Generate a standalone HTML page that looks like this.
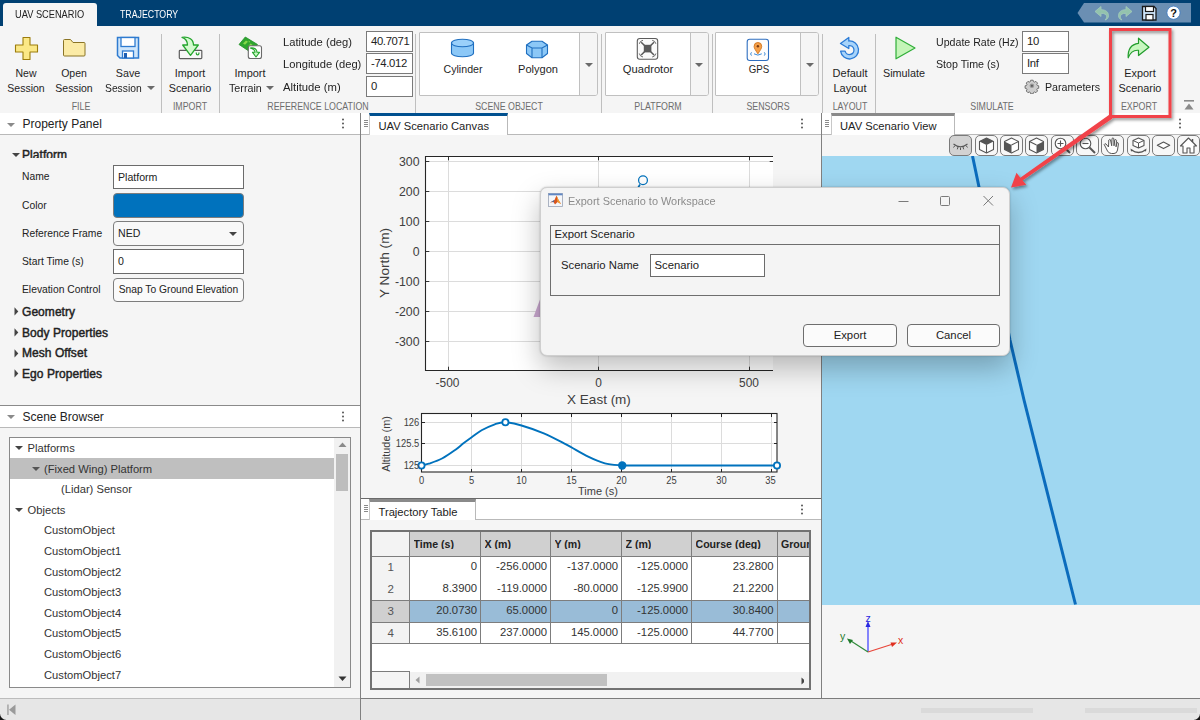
<!DOCTYPE html>
<html>
<head>
<meta charset="utf-8">
<title>UAV Scenario Designer</title>
<style>
*{box-sizing:border-box;margin:0;padding:0}
html,body{width:1200px;height:720px;overflow:hidden;background:#f5f5f5;font-family:"Liberation Sans",sans-serif;color:#222}
.a{position:absolute}
.t{position:absolute;white-space:nowrap;line-height:1}
#top{left:0;top:0;width:1200px;height:26px;background:#004072}
#ribbon{left:0;top:26px;width:1200px;height:87px;background:#f5f5f5}
.rt{position:absolute;white-space:nowrap;font-size:11.3px;line-height:15.3px;text-align:center;color:#1f1f1f;transform:translateX(-50%) scaleX(var(--sx,.95))}
.rl{position:absolute;white-space:nowrap;font-size:11.3px;line-height:14px;color:#1f1f1f;transform-origin:0 50%;transform:scaleX(var(--sx,.95))}
.sec{position:absolute;white-space:nowrap;font-size:10.4px;line-height:12px;color:#6d6d6d;transform:translateX(-50%) scaleX(.85);top:101px}
.sep{position:absolute;width:1px;background:#bfbfbf;top:34px;height:79px}
.inp{position:absolute;letter-spacing:-0.350px;background:#fff;border:1px solid #7a7a7a;font-size:11.3px;line-height:18px;padding-left:4px;color:#222;overflow:hidden;white-space:nowrap}
.gal{position:absolute;top:32px;height:64px;border:1px solid #c0c0c0;border-radius:1px 3px 3px 1px;background:#fff;overflow:hidden}
.gal .dd{position:absolute;right:0;top:0;bottom:0;width:18px;background:#f5f5f5;border-left:1px solid #c0c0c0}
.tri{position:absolute;width:0;height:0;border-left:4px solid transparent;border-right:4px solid transparent;border-top:4.5px solid #6a6a6a}
.ph{position:absolute;background:#fff;border-bottom:1px solid #b9b9b9}
.lbl{position:absolute;white-space:nowrap;font-size:10.3px;line-height:12px;color:#222;left:22px}
.pin{position:absolute;left:113px;width:131px;height:24px;background:#fff;border:1px solid #6b6b6b;font-size:10.6px;line-height:22px;padding-left:4px;white-space:nowrap;overflow:hidden}
.grp{position:absolute;white-space:nowrap;font-size:12px;letter-spacing:0.050px;line-height:14px;font-weight:normal;-webkit-text-stroke:0.450px #222;color:#222;left:22px}
.tr{position:absolute;white-space:nowrap;font-size:11.2px;line-height:14px;color:#333}
.tab{position:absolute;background:#fff;border-right:1px solid #b9b9b9;border-left:1px solid #c8c8c8;border-bottom:1px solid #b9b9b9;font-size:11.2px;line-height:14px;white-space:nowrap;color:#222}
.vb{position:absolute;top:135px;width:23px;height:21px;border:1px solid #8a8a8a;border-radius:4px;background:#f5f5f5}
table{border-collapse:collapse}
</style>
</head>
<body>
<!--RIBBON-->
<div id="ribbon" class="a" style="top:0;height:113px">
<!-- FILE -->
<svg class="a" style="left:14px;top:36px" width="26" height="25" viewBox="0 0 26 25"><path d="M9 1.500 h7 v7.500 h7.500 v7 h-7.500 v7.500 h-7 v-7.500 h-7.500 v-7 h7.500z" fill="#fbe886" stroke="#9c7c0c" stroke-width="1.100" stroke-linejoin="round"/></svg>
<div class="rt" style="--sx:.93;left:25.800px;top:65.600px">New<br>Session</div>
<svg class="a" style="left:62px;top:38px" width="25" height="20" viewBox="0 0 25 20"><path d="M1.500 2.500 q0-1 1-1 h6 l2.500 3 h11 q1 0 1 1 v11.500 q0 1-1 1 h-19.500 q-1 0-1-1z" fill="#fbeba6" stroke="#8a7426" stroke-width="1"/></svg>
<div class="rt" style="--sx:.93;left:74px;top:65.600px">Open<br>Session</div>
<svg class="a" style="left:116px;top:36px" width="24" height="24" viewBox="0 0 24 24"><path d="M1.500 1.500 h21 v20.500 h-18.500 l-2.500-2.500z" fill="#cfe6fb" stroke="#2f7bd0" stroke-width="1.500"/><rect x="5" y="1.500" width="14" height="9" fill="#fff" stroke="#2f7bd0" stroke-width="1.300"/><rect x="6.500" y="15" width="11" height="7" fill="#fff" stroke="#2f7bd0" stroke-width="1.300"/><rect x="8" y="17" width="3" height="5" fill="#1d5fb4"/></svg>
<div class="rt" style="--sx:.95;left:128px;top:65.600px">Save</div>
<div class="rl" style="--sx:.913;left:105px;top:80.600px">Session</div>
<div class="tri" style="left:146.500px;top:86px"></div>
<div class="sec" style="left:80.500px">FILE</div>
<div class="sep" style="left:161px"></div>
<!-- IMPORT -->
<svg class="a" style="left:177px;top:34px" width="27" height="27" viewBox="0 0 27 27"><rect x="2.300" y="16.300" width="22.500" height="8.300" rx="0.800" fill="#f7f7f7" stroke="#5c5c5c" stroke-width="1.200"/><path d="M5 3.300 C12 2.300 16.500 5.500 16.500 11 H21.300 L13.500 21.300 L5.700 11 H10.500 C10.500 7 8.500 4.500 5 3.300 Z" fill="#d4fbcf" stroke="#25a52e" stroke-width="1.300" stroke-linejoin="round"/><path d="M19.300 18.500 v1 a1.300 1.300 0 0 0 2.600 0 v-1" fill="none" stroke="#25a52e" stroke-width="1.200"/></svg>
<div class="rt" style="--sx:.95;left:190px;top:65.600px">Import<br>Scenario</div>
<div class="sec" style="left:190px">IMPORT</div>
<div class="sep" style="left:219px"></div>
<!-- REFERENCE LOCATION -->
<svg class="a" style="left:237px;top:35px" width="27" height="26" viewBox="0 0 27 26"><path d="M2 9.500 L8.300 2 L20.500 9.500 L14 17.500 Z" fill="#2fa52f" stroke="#23922a" stroke-width="0.800" stroke-linejoin="round"/><path d="M6 8.500 l3-3 l2 1.300 l-3 3z M11 11.500 l2.500-3 l2 1.300 l-2.500 3z M11.500 5.500 l1.500 1 l-1 1.200z" fill="#86d84a"/><rect x="11.300" y="10.700" width="13.200" height="12.800" rx="2" fill="#fff" stroke="#6a6a6a" stroke-width="1.100"/><path d="M13.200 13 C17.500 12.500 20 14 20 17.300 H22.500 L19 22 L15.500 17.300 H18 C18 15.300 16.500 14 13.200 13Z" fill="#c9f7c4" stroke="#25a52e" stroke-width="1.100" stroke-linejoin="round"/></svg>
<div class="rt" style="--sx:.97;left:250px;top:65.600px">Import</div>
<div class="rl" style="--sx:.95;left:229px;top:80.600px">Terrain</div>
<div class="tri" style="left:266px;top:86px"></div>
<div class="rl" style="--sx:.99;left:283px;top:35px">Latitude (deg)</div>
<div class="rl" style="--sx:.99;left:283px;top:57px;height:13.200px;overflow:hidden">Longitude (deg)</div>
<div class="rl" style="--sx:.999;left:283px;top:79.700px">Altitude (m)</div>
<div class="inp" style="left:366px;top:31px;width:46.500px;height:20.500px">40.7071</div>
<div class="inp" style="left:366px;top:53px;width:46.500px;height:21px">-74.012</div>
<div class="inp" style="left:366px;top:76px;width:46.500px;height:21px">0</div>
<div class="sec" style="left:317.500px">REFERENCE LOCATION</div>
<div class="sep" style="left:415.300px"></div>
<!-- SCENE OBJECT -->
<div class="gal" style="left:419px;width:179px"><div class="dd"></div></div>
<svg class="a" style="left:450px;top:38px" width="25" height="20" viewBox="0 0 25 20"><path d="M1.500 5 v10 c0 2.200 5 3.800 11 3.800 s11-1.600 11-3.800 v-10z" fill="#8cc8f7" stroke="#1f6fc0" stroke-width="1.100"/><ellipse cx="12.500" cy="5" rx="11" ry="3.800" fill="#9ad0fa" stroke="#1f6fc0" stroke-width="1.100"/></svg>
<div class="rt" style="--sx:.94;left:462.500px;top:62px">Cylinder</div>
<svg class="a" style="left:525px;top:40px" width="24" height="19" viewBox="0 0 24 19"><path d="M1.500 5 l5.500-3.800 h10 l5.500 3.800 v8.500 l-5.500 4.200 h-10 l-5.500-4.200z" fill="#8cc8f7" stroke="#1f6fc0" stroke-width="1.100" stroke-linejoin="round"/><path d="M1.500 5 l5.500 3 h10 l5.500-3 M7 8 v9.700 M17 8 v9.700" fill="none" stroke="#1f6fc0" stroke-width="1.100"/></svg>
<div class="rt" style="--sx:.98;left:537.500px;top:62px">Polygon</div>
<div class="tri" style="left:584.500px;top:62.500px"></div>
<div class="sec" style="left:509px">SCENE OBJECT</div>
<div class="sep" style="left:601px"></div>
<!-- PLATFORM -->
<div class="gal" style="left:605px;width:104px"><div class="dd"></div></div>
<svg class="a" style="left:636px;top:37px" width="23" height="24" viewBox="0 0 23 24"><rect x="1.300" y="1.500" width="20.400" height="20.800" rx="2.500" fill="#fafafa" stroke="#5c5c5c" stroke-width="1.100"/><rect x="7.800" y="7.800" width="7.600" height="7.600" fill="#5a5a5a"/><path d="M8.500 8.500 l-3.300-3.300 M14.700 8.500 l3.300-3.300 M8.500 14.700 l-3.300 3.300 M14.700 14.700 l3.300 3.300" stroke="#5a5a5a" stroke-width="1.500"/><path d="M3.300 6.800 q0.700-3 3.700-3.500 M19.900 6.800 q-0.700-3-3.700-3.500 M3.300 16.500 q0.700 3 3.700 3.500 M19.900 16.500 q-0.700 3-3.700 3.500" fill="none" stroke="#5a5a5a" stroke-width="0.900"/></svg>
<div class="rt" style="--sx:.99;left:647.500px;top:62px">Quadrotor</div>
<div class="tri" style="left:695px;top:62.500px"></div>
<div class="sec" style="left:657.500px">PLATFORM</div>
<div class="sep" style="left:712px"></div>
<!-- SENSORS -->
<div class="gal" style="left:715px;width:104px"><div class="dd"></div></div>
<svg class="a" style="left:746px;top:38px" width="24" height="24" viewBox="0 0 24 24"><rect x="1.200" y="1.200" width="21.300" height="21.300" rx="2.500" fill="#fdfdfd" stroke="#2f6fc0" stroke-width="1.100"/><path d="M11.900 15.800 c-2.500-3.800-3.800-5.500-3.800-7.500 a3.800 3.800 0 0 1 7.600 0 c0 2-1.300 3.700-3.800 7.500z" fill="#f5a04a" stroke="#d07318" stroke-width="0.900"/><circle cx="11.900" cy="8.200" r="1.200" fill="#7a3a10"/><path d="M8 15.800 q3.900 2.600 7.800 0 M5.500 14.300 q-1.800 1.700 0 3.300 M18.300 14.300 q1.800 1.700 0 3.300" fill="none" stroke="#3b8ad8" stroke-width="1"/></svg>
<div class="rt" style="--sx:.86;left:758.500px;top:62px">GPS</div>
<div class="tri" style="left:806px;top:62.500px"></div>
<div class="sec" style="left:767.500px">SENSORS</div>
<div class="sep" style="left:822px"></div>
<!-- LAYOUT -->
<svg class="a" style="left:838px;top:36px" width="24" height="25" viewBox="0 0 24 25"><path d="M10.800 1.500 L2.500 7.500 L10.800 12.500 V9.600 A4.500 4.500 0 1 1 7.100 15.200 H2.600 A9 9 0 1 0 10.800 5 Z" fill="#a8d4fa" stroke="#2b7bd6" stroke-width="1.300" stroke-linejoin="round"/></svg>
<div class="rt" style="--sx:.975;left:849.500px;top:65.600px">Default<br>Layout</div>
<div class="sec" style="left:849.500px">LAYOUT</div>
<div class="sep" style="left:875px"></div>
<!-- SIMULATE -->
<svg class="a" style="left:893.700px;top:35px" width="23" height="26" viewBox="0 0 23 26"><path d="M2 2.200 v21.600 l19-10.800z" fill="#c4f5b8" stroke="#2fae38" stroke-width="1.200" stroke-linejoin="round"/></svg>
<div class="rt" style="--sx:.955;left:904px;top:65.600px">Simulate</div>
<div class="rl" style="--sx:.94;left:936px;top:35px">Update Rate (Hz)</div>
<div class="rl" style="--sx:.945;left:936px;top:57px;height:12.700px;overflow:hidden">Stop Time (s)</div>
<div class="inp" style="left:1022px;top:31px;width:47px;height:20.500px">10</div>
<div class="inp" style="left:1022px;top:53px;width:47px;height:21px">Inf</div>
<svg class="a" style="left:1024px;top:78px" width="16" height="16" viewBox="0 0 16 16"><g transform="translate(7.900,7.800)"><path d="M-1.500-6.800h3l.4 1.700 1.300.6 1.600-.9 2.100 2.100-.9 1.600.6 1.300 1.700.4v3l-1.700.4-.6 1.300.9 1.600-2.100 2.100-1.600-.9-1.300.6-.4 1.700h-3l-.4-1.700-1.300-.6-1.600.9-2.100-2.100.9-1.600-.6-1.300-1.700-.4v-3l1.700-.4.600-1.300-.9-1.600 2.100-2.100 1.600.9 1.300-.6z" transform="scale(0.820)" fill="#cdcdcd" stroke="#6f6f6f" stroke-width="1.200" stroke-linejoin="round"/><circle r="2.300" fill="#9a9a9a"/><circle r="1.100" fill="#5f5f5f"/></g></svg>
<div class="rl" style="--sx:.945;left:1044.700px;top:80px">Parameters</div>
<div class="sec" style="left:992px">SIMULATE</div>
<!-- EXPORT -->
<svg class="a" style="left:1126px;top:36px" width="25" height="25" viewBox="0 0 25 25"><path d="M12.500 2.200 l10.500 9 l-10.500 8.300 v-5.200 c-5-0.500-8 1.500-10.300 7.500 c-0.500-8 2.800-13.500 10.300-14.500z" fill="#c8f7c0" stroke="#219c2c" stroke-width="1.200" stroke-linejoin="round"/></svg>
<div class="rt" style="--sx:.96;left:1139.500px;top:65.600px">Export<br>Scenario</div>
<div class="sec" style="left:1139px">EXPORT</div>
<svg class="a" style="left:1183px;top:99px" width="12" height="12" viewBox="0 0 12 12"><rect x="1" y="1" width="10" height="1.600" fill="#8a8a8a"/><path d="M6 4.500 l4.500 6 h-9z" fill="#8a8a8a"/></svg>
</div>
<!--TOP-->
<div id="top" class="a">
<div class="a" style="left:3px;top:3px;width:94px;height:23px;background:#f5f5f5;border-radius:3px 3px 0 0"></div>
<div class="t" style="left:15px;top:9.7px;font-size:10.4px;color:#222;transform-origin:0 50%;transform:scaleX(.89)">UAV SCENARIO</div>
<div class="t" style="left:120px;top:9.7px;font-size:10.4px;color:#fff;transform-origin:0 50%;transform:scaleX(.845)">TRAJECTORY</div>
<svg class="a" style="left:1076px;top:3px" width="116" height="20" viewBox="0 0 116 20">
<path d="M1.5 10 L8 0 H115 V19.5 H8 Z" fill="#6b8fb3"/>
<g fill="#93c3ad" stroke="#a5cbbb" stroke-width="0.8">
<path d="M19 8.5 l6-5 v3.2 c5 0 7.5 2.5 7.5 6 c0 2.300-1.500 3.800-3.500 4.300 c1.300-1.200 1.600-2.200 1.600-3.400 c0-2-1.800-3.300-5.600-3.300 v3.200z"/>
<path d="M56 8.500 l-6-5 v3.200 c-5 0-7.500 2.500-7.500 6 c0 2.300 1.500 3.800 3.500 4.300 c-1.300-1.200-1.600-2.200-1.600-3.400 c0-2 1.800-3.300 5.600-3.300 v3.200z"/>
</g>
<path d="M66.500 3.500 h11.500 l2 2 v11.500 h-13.500z" fill="#cfe6fb" stroke="#1a1a1a" stroke-width="1.300"/>
<rect x="69.500" y="3.500" width="8" height="5" fill="#fff" stroke="#1a1a1a" stroke-width="1.200"/>
<rect x="70" y="11.500" width="7" height="5.500" fill="#fff" stroke="#1a1a1a" stroke-width="1.200"/>
<circle cx="97.500" cy="9.700" r="6.600" fill="#fff" stroke="#3a78c2" stroke-width="0.800"/>
<text x="97.500" y="13.700" font-family="Liberation Sans, sans-serif" font-weight="bold" font-size="11" text-anchor="middle" fill="#111">?</text>
</svg>
</div>
<!--LEFT-->
<div class="ph" style="left:0;top:113px;width:360px;height:22px"></div>
<div class="tri" style="left:7px;top:122.500px;border-top-color:#8a8a8a;border-left-width:4px;border-right-width:4px;border-top-width:4px;margin-left:-0.500px"></div>
<div class="t" style="left:22.500px;top:118px;font-size:12px;color:#222">Property Panel</div>
<svg class="a" style="left:341px;top:118px" width="4" height="11"><circle cx="2" cy="1.500" r="1" fill="#555"/><circle cx="2" cy="5.500" r="1" fill="#555"/><circle cx="2" cy="9.500" r="1" fill="#555"/></svg>
<div class="tri" style="left:12.500px;top:152.500px;border-top-color:#444;border-left-width:4px;border-right-width:4px;border-top-width:4px;margin-left:-0.500px"></div>
<div class="grp" style="top:147.500px;height:10.500px;overflow:hidden">Platform</div>
<div class="lbl" style="top:171px">Name</div>
<div class="pin" style="top:165px">Platform</div>
<div class="lbl" style="top:199.5px">Color</div>
<div class="a" style="left:113px;top:193px;width:131px;height:25px;background:#0072bd;border:1px solid #7d7d7d;border-radius:4px"></div>
<div class="lbl" style="top:227.5px">Reference Frame</div>
<div class="pin" style="top:221px;height:25px;line-height:23px;border-radius:4px;background:#f8f8f8;border-color:#7d7d7d">NED</div>
<div class="tri" style="left:229px;top:231.500px;border-top-color:#444;border-left-width:4px;border-right-width:4px;border-top-width:4px;margin-left:-0.500px"></div>
<div class="lbl" style="top:255.5px">Start Time (s)</div>
<div class="pin" style="top:249px;height:25px;line-height:23px">0</div>
<div class="lbl" style="top:284px">Elevation Control</div>
<div class="pin" style="top:278px;border-radius:4px;background:#fafafa;border-color:#7d7d7d;padding-left:0;text-align:center;font-size:10.250px">Snap To Ground Elevation</div>
<svg class="a" style="left:13.500px;top:307px" width="5" height="9"><path d="M0.500 0.300 v8.200 l3.800-4.100z" fill="#444"/></svg>
<div class="grp" style="top:304.500px">Geometry</div>
<svg class="a" style="left:13.500px;top:328px" width="5" height="9"><path d="M0.500 0.300 v8.200 l3.800-4.100z" fill="#444"/></svg>
<div class="grp" style="top:325.500px">Body Properties</div>
<svg class="a" style="left:13.500px;top:348.500px" width="5" height="9"><path d="M0.500 0.300 v8.200 l3.800-4.100z" fill="#444"/></svg>
<div class="grp" style="top:346px">Mesh Offset</div>
<svg class="a" style="left:13.500px;top:369px" width="5" height="9"><path d="M0.500 0.300 v8.200 l3.800-4.100z" fill="#444"/></svg>
<div class="grp" style="top:366.500px">Ego Properties</div>
<div class="ph" style="left:0;top:405px;width:360px;height:23px;border-top:1px solid #8a8a8a"></div>
<div class="tri" style="left:7px;top:414.500px;border-top-color:#8a8a8a;border-left-width:4px;border-right-width:4px;border-top-width:4px;margin-left:-0.500px"></div>
<div class="t" style="left:22.500px;top:410.500px;font-size:12px;color:#222">Scene Browser</div>
<svg class="a" style="left:341px;top:411px" width="4" height="11"><circle cx="2" cy="1.500" r="1" fill="#555"/><circle cx="2" cy="5.500" r="1" fill="#555"/><circle cx="2" cy="9.500" r="1" fill="#555"/></svg>
<div class="a" style="left:9px;top:437px;width:342px;height:251px;background:#fff;border:1px solid #8a8a8a"></div>
<div class="a" style="left:10px;top:458px;width:324px;height:20.500px;background:#bfbfbf"></div>
<div class="a" style="left:334px;top:438px;width:16px;height:249px;background:#f1f1f1"></div>
<div class="a" style="left:336px;top:453.500px;width:12px;height:37px;background:#bdbdbd"></div>
<svg class="a" style="left:338px;top:442px" width="9" height="6"><path d="M0.500 5 l4-4.500 l4 4.500z" fill="#8a8a8a"/></svg>
<svg class="a" style="left:338px;top:676px" width="9" height="6"><path d="M0.500 0.500 l4 4.500 l4-4.500z" fill="#333"/></svg>
<div class="tri" style="left:15px;top:445.500px;border-top-color:#444;border-left-width:4px;border-right-width:4px;border-top-width:4px;margin-left:-0.500px"></div>
<div class="tr" style="left:27.500px;top:440.500px">Platforms</div>
<div class="tri" style="left:32px;top:466.500px;border-top-color:#555;border-left-width:4px;border-right-width:4px;border-top-width:4px;margin-left:-0.500px"></div>
<div class="tr" style="left:44px;top:461.500px">(Fixed Wing) Platform</div>
<div class="tr" style="left:61px;top:482px">(Lidar) Sensor</div>
<div class="tri" style="left:15px;top:507.500px;border-top-color:#444;border-left-width:4px;border-right-width:4px;border-top-width:4px;margin-left:-0.500px"></div>
<div class="tr" style="left:27.500px;top:502.500px">Objects</div>
<div class="tr" style="left:44px;top:523px">CustomObject</div>
<div class="tr" style="left:44px;top:543.500px">CustomObject1</div>
<div class="tr" style="left:44px;top:564.500px">CustomObject2</div>
<div class="tr" style="left:44px;top:585px">CustomObject3</div>
<div class="tr" style="left:44px;top:605.500px">CustomObject4</div>
<div class="tr" style="left:44px;top:626px">CustomObject5</div>
<div class="tr" style="left:44px;top:647px">CustomObject6</div>
<div class="tr" style="left:44px;top:667.500px">CustomObject7</div>
<div class="a" style="left:360px;top:113px;width:1px;height:607px;background:#808080"></div>
<!--CENTER-->
<div class="ph" style="left:361px;top:113px;width:461px;height:22px"></div>
<div class="tab" style="left:369px;top:113px;width:139px;height:22px;border-top:3px solid #00508f;border-bottom:none;background:#fff;padding:3px 0 0 8.500px">UAV Scenario Canvas</div>
<svg class="a" style="left:364px;top:120px" width="4" height="8"><path d="M0 0.500h4M0 2.500h4M0 4.500h4M0 6.500h4" stroke="#8a8a8a" stroke-width="1"/></svg>
<svg class="a" style="left:800px;top:118px" width="4" height="11"><circle cx="2" cy="1.500" r="1" fill="#555"/><circle cx="2" cy="5.500" r="1" fill="#555"/><circle cx="2" cy="9.500" r="1" fill="#555"/></svg>
<svg class="a" style="left:361px;top:135px" width="461" height="363" viewBox="361 135 461 363" font-family="Liberation Sans, sans-serif">
<rect x="426" y="156.500" width="347" height="214" fill="#fff"/>
<g stroke="#dcdcdc" stroke-width="1">
<path d="M426 161.500H773M426 191.500H773M426 221.500H773M426 251.500H773M426 281.500H773M426 311.500H773M426 341.500H773M448.500 157V370M598.500 157V370M749.500 157V370"/>
</g>
<path d="M773 156.500H425.500V370.500H773" fill="none" stroke="#262626" stroke-width="1.100"/>
<path d="M426 161.500h3.300M426 191.500h3.300M426 221.500h3.300M426 251.500h3.300M426 281.500h3.300M426 311.500h3.300M426 341.500h3.300M448.500 370v-3.300M598.500 370v-3.300M749.500 370v-3.300M448.500 157v3.300M598.500 157v3.300M749.500 157v3.300M769.700 161.500h3.300" stroke="#333" stroke-width="1"/>
<g font-size="12.300" fill="#404040" text-anchor="end">
<text x="419.500" y="166">300</text><text x="419.500" y="196">200</text><text x="419.500" y="226">100</text><text x="419.500" y="256">0</text><text x="419.500" y="286">-100</text><text x="419.500" y="316">-200</text><text x="419.500" y="346">-300</text>
</g>
<g font-size="11.900" fill="#404040" text-anchor="middle">
<text x="447.500" y="386.900">-500</text><text x="598.500" y="386.900">0</text><text x="749" y="386.900">500</text>
</g>
<text x="599" y="404" font-size="13.500" fill="#404040" text-anchor="middle">X East (m)</text>
<text transform="translate(388.700,263) rotate(-90)" font-size="13.600" fill="#404040" text-anchor="middle">Y North (m)</text>
<path d="M533.500 317 L542 294 L545 317z" fill="#c9a7cf"/>
<path d="M640 184.500 L560 318" stroke="#0072bd" stroke-width="1.600"/><circle cx="643" cy="180.300" r="4.400" fill="#fff" stroke="#0072bd" stroke-width="1.250"/>
<!-- altitude -->
<rect x="421.500" y="413.500" width="355.500" height="58.500" fill="#fff"/>
<path d="M471.500 414V471.500M521.500 414V471.500M571.500 414V471.500M621.500 414V471.500M671.500 414V471.500M721.500 414V471.500M771.500 414V471.500M422 422.500H777M422 443.500H777M422 465.500H777" stroke="#dcdcdc" stroke-width="1"/>
<rect x="421.500" y="413.500" width="355.500" height="58.500" fill="none" stroke="#262626" stroke-width="1.100"/>
<path d="M471.500 472v-3M521.500 472v-3M571.500 472v-3M621.500 472v-3M671.500 472v-3M721.500 472v-3M771.500 472v-3M471.500 414v3M521.500 414v3M571.500 414v3M621.500 414v3M671.500 414v3M721.500 414v3M771.500 414v3M422 422.500h3M422 443.500h3M422 465.500h3M777 422.500h-3M777 443.500h-3M777 465.500h-3" stroke="#262626" stroke-width="1"/>
<path d="M421.5 465.5 C422.7 465.2 425.4 464.9 428.8 463.7 C432.2 462.5 437.6 460.8 442.0 458.5 C446.4 456.2 451.7 452.4 455.2 449.9 C458.7 447.4 460.4 445.7 463.1 443.6 C465.9 441.5 468.6 439.5 471.7 437.3 C474.8 435.1 477.8 432.5 481.6 430.3 C485.5 428.1 490.8 425.7 494.8 424.3 C498.8 422.9 500.9 422.0 505.4 422.2 C509.8 422.4 515.1 423.6 521.5 425.5 C527.9 427.4 536.4 430.2 543.8 433.3 C551.2 436.4 558.6 440.5 566.0 444.4 C573.4 448.3 581.7 453.5 588.2 456.7 C594.7 459.9 599.2 461.8 604.9 463.3 C610.6 464.8 619.3 465.1 622.2 465.5 L777 465.5" fill="none" stroke="#0072bd" stroke-width="1.900" stroke-linejoin="round"/>
<circle cx="421.500" cy="465.500" r="3.100" fill="#fff" stroke="#0072bd" stroke-width="1.800"/>
<circle cx="505.400" cy="422.200" r="3.100" fill="#fff" stroke="#0072bd" stroke-width="1.800"/>
<circle cx="622.200" cy="465.500" r="4.200" fill="#0072bd"/>
<circle cx="777" cy="465.500" r="3.100" fill="#fff" stroke="#0072bd" stroke-width="1.800"/>
<g font-size="10.200" fill="#404040" text-anchor="end"><text transform="translate(419.300,426.3) scale(.92,1)">126</text><text transform="translate(419.300,447.2) scale(.92,1)">125.5</text><text transform="translate(419.300,469) scale(.92,1)">125</text></g>
<g font-size="10.200" fill="#404040" text-anchor="middle"><text transform="translate(421.500,484.200) scale(.92,1)">0</text><text transform="translate(471.500,484.200) scale(.92,1)">5</text><text transform="translate(521.500,484.200) scale(.92,1)">10</text><text transform="translate(571.500,484.200) scale(.92,1)">15</text><text transform="translate(621.500,484.200) scale(.92,1)">20</text><text transform="translate(671.500,484.200) scale(.92,1)">25</text><text transform="translate(721.500,484.200) scale(.92,1)">30</text><text transform="translate(770.500,484.200) scale(.92,1)">35</text></g>
<text x="598" y="495" font-size="11" fill="#404040" text-anchor="middle">Time (s)</text>
<text transform="translate(389.800,444) rotate(-90)" font-size="10.900" fill="#404040" text-anchor="middle">Altitude (m)</text>
</svg>
<div class="a" style="left:361px;top:498px;width:461px;height:1px;background:#6a6a6a"></div>
<div class="ph" style="left:361px;top:499px;width:461px;height:21px"></div>
<div class="tab" style="left:369px;top:499px;width:107px;height:21px;border-top:3px solid #8a8a8a;border-bottom:none;padding:2.500px 0 0 8.500px;font-size:11.200px">Trajectory Table</div>
<svg class="a" style="left:364px;top:505px" width="4" height="8"><path d="M0 0.500h4M0 2.500h4M0 4.500h4M0 6.500h4" stroke="#8a8a8a" stroke-width="1"/></svg>
<svg class="a" style="left:800px;top:504px" width="4" height="11"><circle cx="2" cy="1.500" r="1" fill="#555"/><circle cx="2" cy="5.500" r="1" fill="#555"/><circle cx="2" cy="9.500" r="1" fill="#555"/></svg>
<div class="a" style="left:370px;top:530px;width:441px;height:159.500px;background:#fff;border:2px solid #727272"></div>
<div class="a" style="left:372px;top:532px;width:37.500px;height:24px;background:#f3f3f3"></div>
<div class="a" style="left:409.500px;top:532px;width:399.500px;height:24px;background:#d0d0d0"></div>
<div class="a" style="left:372px;top:556px;width:37.500px;height:88px;background:#f3f3f3"></div>
<div class="a" style="left:372px;top:600px;width:37.500px;height:22px;background:#d0d0d0"></div>
<div class="a" style="left:409.500px;top:600px;width:399.500px;height:22px;background:#99bcd7"></div>
<div class="a" style="left:408.7px;top:532px;width:1px;height:112px;background:#7d7d7d"></div>
<div class="a" style="left:479.7px;top:532px;width:1px;height:112px;background:#7d7d7d"></div>
<div class="a" style="left:549.7px;top:532px;width:1px;height:112px;background:#7d7d7d"></div>
<div class="a" style="left:620.7px;top:532px;width:1px;height:112px;background:#7d7d7d"></div>
<div class="a" style="left:690.7px;top:532px;width:1px;height:112px;background:#7d7d7d"></div>
<div class="a" style="left:777px;top:532px;width:1px;height:112px;background:#7d7d7d"></div>
<div class="a" style="left:372px;top:556px;width:437px;height:1px;background:#7d7d7d"></div>
<div class="a" style="left:372px;top:600px;width:437px;height:1px;background:#7d7d7d"></div>
<div class="a" style="left:372px;top:622px;width:437px;height:1px;background:#7d7d7d"></div>
<div class="a" style="left:372px;top:643px;width:437px;height:1px;background:#7d7d7d"></div>
<div class="t" style="left:413.5px;top:538.500px;font-size:10.600px;font-weight:bold;color:#222;height:10.500px;overflow:hidden">Time (s)</div>
<div class="t" style="left:484.5px;top:538.500px;font-size:10.600px;font-weight:bold;color:#222;height:10.500px;overflow:hidden">X (m)</div>
<div class="t" style="left:554.5px;top:538.500px;font-size:10.600px;font-weight:bold;color:#222;height:10.500px;overflow:hidden">Y (m)</div>
<div class="t" style="left:625.5px;top:538.500px;font-size:10.600px;font-weight:bold;color:#222;height:10.500px;overflow:hidden">Z (m)</div>
<div class="t" style="left:695.5px;top:538.500px;font-size:10.600px;font-weight:bold;color:#222;height:10.500px;overflow:hidden">Course (deg)</div>
<div class="t" style="left:781px;top:538.500px;font-size:10.600px;font-weight:bold;color:#222;height:10.500px;overflow:hidden;width:28px;overflow:hidden">Groun</div>
<div class="t" style="left:372px;width:37.500px;text-align:center;top:562px;font-size:11.500px;color:#555">1</div>
<div class="t" style="right:723px;top:561.3px;font-size:11.300px;color:#333">0</div>
<div class="t" style="right:653px;top:561.3px;font-size:11.300px;color:#333">-256.0000</div>
<div class="t" style="right:582px;top:561.3px;font-size:11.300px;color:#333">-137.0000</div>
<div class="t" style="right:512px;top:561.3px;font-size:11.300px;color:#333">-125.0000</div>
<div class="t" style="right:426.5px;top:561.3px;font-size:11.300px;color:#333">23.2800</div>
<div class="t" style="left:372px;width:37.500px;text-align:center;top:584px;font-size:11.500px;color:#555">2</div>
<div class="t" style="right:723px;top:583.3px;font-size:11.300px;color:#333">8.3900</div>
<div class="t" style="right:653px;top:583.3px;font-size:11.300px;color:#333">-119.0000</div>
<div class="t" style="right:582px;top:583.3px;font-size:11.300px;color:#333">-80.0000</div>
<div class="t" style="right:512px;top:583.3px;font-size:11.300px;color:#333">-125.9900</div>
<div class="t" style="right:426.5px;top:583.3px;font-size:11.300px;color:#333">21.2200</div>
<div class="t" style="left:372px;width:37.500px;text-align:center;top:606px;font-size:11.500px;color:#555">3</div>
<div class="t" style="right:723px;top:605.3px;font-size:11.300px;color:#333">20.0730</div>
<div class="t" style="right:653px;top:605.3px;font-size:11.300px;color:#333">65.0000</div>
<div class="t" style="right:582px;top:605.3px;font-size:11.300px;color:#333">0</div>
<div class="t" style="right:512px;top:605.3px;font-size:11.300px;color:#333">-125.0000</div>
<div class="t" style="right:426.5px;top:605.3px;font-size:11.300px;color:#333">30.8400</div>
<div class="t" style="left:372px;width:37.500px;text-align:center;top:628px;font-size:11.500px;color:#555">4</div>
<div class="t" style="right:723px;top:627.3px;font-size:11.300px;color:#333">35.6100</div>
<div class="t" style="right:653px;top:627.3px;font-size:11.300px;color:#333">237.0000</div>
<div class="t" style="right:582px;top:627.3px;font-size:11.300px;color:#333">145.0000</div>
<div class="t" style="right:512px;top:627.3px;font-size:11.300px;color:#333">-125.0000</div>
<div class="t" style="right:426.5px;top:627.3px;font-size:11.300px;color:#333">44.7700</div>
<div class="a" style="left:372px;top:671px;width:37.500px;height:16.500px;background:#f5f5f5;border-top:1px solid #7d7d7d;border-right:1px solid #7d7d7d"></div>
<div class="a" style="left:409.500px;top:671.500px;width:399.500px;height:16px;background:#f1f1f1"></div>
<div class="a" style="left:426px;top:674px;width:181px;height:12px;background:#c1c1c1"></div>
<svg class="a" style="left:415px;top:676px" width="5" height="8"><path d="M4.500 0.500v7l-4-3.500z" fill="#a0a0a0"/></svg>
<svg class="a" style="left:801px;top:676.500px" width="3" height="8"><path d="M0.500 0.500v7l4-3.500z" fill="#444"/></svg>
<!--RIGHT-->
<div class="ph" style="left:822px;top:113px;width:378px;height:22px"></div>
<div class="a" style="left:821px;top:113px;width:1px;height:585px;background:#808080"></div>
<div class="tab" style="left:831px;top:113px;width:124px;height:22px;border-top:3px solid #8a8a8a;border-bottom:none;padding:2.500px 0 0 8px;font-size:11.200px">UAV Scenario View</div>
<svg class="a" style="left:825px;top:120px" width="4" height="8"><path d="M0 0.500h4M0 2.500h4M0 4.500h4M0 6.500h4" stroke="#8a8a8a" stroke-width="1"/></svg>
<svg class="a" style="left:1178px;top:118px" width="4" height="11"><circle cx="2" cy="1.500" r="1" fill="#555"/><circle cx="2" cy="5.500" r="1" fill="#555"/><circle cx="2" cy="9.500" r="1" fill="#555"/></svg>
<div class="a" style="left:822px;top:156px;width:378px;height:448.500px;background:#9fd7f1"></div>
<svg class="a" style="left:823px;top:156px" width="377" height="449" viewBox="823 156 377 449"><path d="M972.500 156 L979 187 L1010 340 L1024 400 L1075.500 604.500" fill="none" stroke="#0b6cbd" stroke-width="3"/></svg>
<svg class="a" style="left:949.1px;top:135px" width="23" height="21" viewBox="0 0 23 21"><rect x="0.500" y="0.500" width="22" height="20" rx="4.500" fill="#d2d2d2" stroke="#7a7a7a" stroke-width="1"/><path d="M4.500 9 q7 5.500 14 0" fill="none" stroke="#555" stroke-width="1.100"/><path d="M6 10.500 l-1.500 2 M9 12 l-0.700 2.300 M11.500 12.500 v2.500 M14 12 l0.700 2.300 M17 10.500 l1.500 2" stroke="#555" stroke-width="1"/></svg>
<svg class="a" style="left:974.5px;top:135px" width="23" height="21" viewBox="0 0 23 21"><rect x="0.500" y="0.500" width="22" height="20" rx="4.500" fill="#f7f7f7" stroke="#7a7a7a" stroke-width="1"/><path d="M11.500 3 l7 3.500 v8 l-7 3.500 l-7-3.500 v-8z" fill="#fff" stroke="#555" stroke-width="1.100" stroke-linejoin="round"/><path d="M11.500 3 l7 3.500 l-7 3.500 l-7-3.500z" fill="#555"/><path d="M11.500 10 v8" stroke="#555" stroke-width="1.100"/></svg>
<svg class="a" style="left:999.8px;top:135px" width="23" height="21" viewBox="0 0 23 21"><rect x="0.500" y="0.500" width="22" height="20" rx="4.500" fill="#f7f7f7" stroke="#7a7a7a" stroke-width="1"/><path d="M11.500 3 l7 3.500 v8 l-7 3.500 l-7-3.500 v-8z" fill="#fff" stroke="#555" stroke-width="1.100" stroke-linejoin="round"/><path d="M4.500 6.500 l7 3.500 v8 l-7-3.500z" fill="#555"/><path d="M11.500 10 l7-3.500" stroke="#555" stroke-width="1.100"/></svg>
<svg class="a" style="left:1025.2px;top:135px" width="23" height="21" viewBox="0 0 23 21"><rect x="0.500" y="0.500" width="22" height="20" rx="4.500" fill="#f7f7f7" stroke="#7a7a7a" stroke-width="1"/><path d="M11.500 3 l7 3.500 v8 l-7 3.500 l-7-3.500 v-8z" fill="#fff" stroke="#555" stroke-width="1.100" stroke-linejoin="round"/><path d="M18.500 6.500 l-7 3.500 v8 l7-3.500z" fill="#555"/><path d="M11.500 10 l-7-3.500" stroke="#555" stroke-width="1.100"/></svg>
<svg class="a" style="left:1050.5px;top:135px" width="23" height="21" viewBox="0 0 23 21"><rect x="0.500" y="0.500" width="22" height="20" rx="4.500" fill="#f7f7f7" stroke="#7a7a7a" stroke-width="1"/><circle cx="9.500" cy="8.500" r="5.300" fill="#fff" stroke="#555" stroke-width="1.100"/><path d="M6.500 8.500h6M9.500 5.500v6" stroke="#555" stroke-width="1.100"/><path d="M13.500 12.500 l5.500 5.500" stroke="#555" stroke-width="2"/></svg>
<svg class="a" style="left:1075.8px;top:135px" width="23" height="21" viewBox="0 0 23 21"><rect x="0.500" y="0.500" width="22" height="20" rx="4.500" fill="#f7f7f7" stroke="#7a7a7a" stroke-width="1"/><circle cx="9.500" cy="8.500" r="5.300" fill="#fff" stroke="#555" stroke-width="1.100"/><path d="M6.500 8.500h6" stroke="#555" stroke-width="1.100"/><path d="M13.500 12.500 l5.500 5.500" stroke="#555" stroke-width="2"/></svg>
<svg class="a" style="left:1101.2px;top:135px" width="23" height="21" viewBox="0 0 23 21"><rect x="0.500" y="0.500" width="22" height="20" rx="4.500" fill="#f7f7f7" stroke="#7a7a7a" stroke-width="1"/><path d="M7.500 12 l-2.500-3 q-1.200-0.800-1.800 0.500 l3.300 6.500 q1.500 2.500 4 2.500 h2.500 q3 0 3.500-3.500 l1-6.500 q-0.300-1.300-1.500-0.700 l-1 4 l0.500-6.500 q-0.500-1.300-1.700-0.500 l-0.800 6 l-0.200-7.300 q-0.800-1.200-1.800 0 l-0.300 7.300 l-1.200-6 q-0.900-1-1.700 0.200z" fill="#fff" stroke="#555" stroke-width="1" stroke-linejoin="round"/></svg>
<svg class="a" style="left:1126.5px;top:135px" width="23" height="21" viewBox="0 0 23 21"><rect x="0.500" y="0.500" width="22" height="20" rx="4.500" fill="#f7f7f7" stroke="#7a7a7a" stroke-width="1"/><path d="M11.500 3 l5.500 2.500 v5 l-5.500 2.500 l-5.500-2.500 v-5z" fill="#fff" stroke="#555" stroke-width="1.100" stroke-linejoin="round"/><path d="M6 5.500 l5.500 2.500 l5.500-2.500 M11.500 8 v5" fill="none" stroke="#555" stroke-width="1"/><path d="M4.500 15 q7 5 14 0" fill="none" stroke="#555" stroke-width="1.300"/><path d="M3.500 13.500 l0.500 3 l2.500-1z M19.500 13.500 l-0.500 3 l-2.500-1z" fill="#555"/></svg>
<svg class="a" style="left:1151.9px;top:135px" width="23" height="21" viewBox="0 0 23 21"><rect x="0.500" y="0.500" width="22" height="20" rx="4.500" fill="#f7f7f7" stroke="#7a7a7a" stroke-width="1"/><path d="M11.500 7 l6.200 3.300 l-6.200 3.300 l-6.200-3.300z" fill="#fff" stroke="#555" stroke-width="1.100" stroke-linejoin="round"/></svg>
<svg class="a" style="left:1177.2px;top:135px" width="23" height="21" viewBox="0 0 23 21"><rect x="0.500" y="0.500" width="22" height="20" rx="4.500" fill="#f7f7f7" stroke="#7a7a7a" stroke-width="1"/><path d="M3.500 11 l8-8 l8 8 h-2.500 v7 h-4 v-5 h-3 v5 h-4 v-7z" fill="#fff" stroke="#555" stroke-width="1.100" stroke-linejoin="round"/><path d="M15.500 4 v3" stroke="#555" stroke-width="1.500"/></svg>
<svg class="a" style="left:835px;top:605px" width="80" height="60" viewBox="835 605 80 60" font-family="Liberation Sans, sans-serif">
<path d="M868 652 V625" stroke="#3a3aff" stroke-width="1.200"/><path d="M868 621 l-2.500 6 h5z" fill="#2a2ae0"/>
<path d="M868 652 L893 644" stroke="#e8463a" stroke-width="1.200"/><path d="M897 642.500 l-6.500 0 l1.500 4.500z" fill="#e03020"/>
<path d="M868 652 L851 641" stroke="#2f8a3a" stroke-width="1.200"/><path d="M847 638.500 l3 5.500 l3-4z" fill="#1f7a2a"/>
<text x="868" y="622" font-size="10.500" text-anchor="middle" fill="#2a2ae0">z</text>
<text x="900.500" y="644" font-size="10.500" text-anchor="middle" fill="#e03020">x</text>
<text x="842.500" y="640" font-size="10.500" text-anchor="middle" fill="#1f7a2a">y</text>
</svg>
<!--STATUS-->
<div class="a" style="left:0;top:698px;width:1200px;height:22px;background:#e6e6e6;border-top:1px solid #7c7c7c"></div>
<div class="a" style="left:0;top:698px;width:360px;height:1px;background:#bcbcbc"></div>
<div class="a" style="left:360px;top:698px;width:1px;height:22px;background:#808080"></div>
<svg class="a" style="left:6.500px;top:703.500px" width="10" height="12"><rect x="0.300" y="0.500" width="1.300" height="10.500" fill="#9a9a9a"/><path d="M8.500 0.500 v10.500 l-6.500-5.250z" fill="#9a9a9a"/></svg>
<svg class="a" style="left:0;top:712px" width="1200" height="8" viewBox="0 712 1200 8"><path d="M0 713.500 A6.500 6.500 0 0 0 6.500 720 L0 720 Z M1200 713.500 A6.500 6.500 0 0 1 1193.500 720 L1200 720 Z" fill="#151515"/></svg>
<div class="a" style="left:921px;top:707.500px;width:111.500px;height:5px;background:#dadada"></div>
<div class="a" style="left:1085px;top:707.500px;width:111.500px;height:5px;background:#dadada"></div>
<!--DIALOG-->
<div class="a" style="left:540px;top:187px;width:470px;height:169px;background:#f4f4f4;border:1px solid #cfcfcf;border-radius:7px;box-shadow:0 12px 28px rgba(0,0,0,0.260),0 0 2px rgba(0,0,0,0.250)"></div>
<svg class="a" style="left:548px;top:193px" width="15" height="14" viewBox="0 0 15 14"><rect x="0.500" y="0.500" width="14" height="13" fill="#f4f6fa" stroke="#9aa3b5" stroke-width="0.800"/><rect x="0.500" y="0.500" width="14" height="1.800" fill="#5f86c4"/><path d="M2 9.500 l4.500-2.500 l2-4.500 l1.800 4 l2.700 4.500 l-3.500-2 l-2.500 2.500 l-1.500-2.500z" fill="#d9541e"/><path d="M2 9.500 l4.500-2.500 l-1 2.500 l-1-1z" fill="#2f6fb5"/><path d="M8.500 2.500 l1.800 4 l2.700 4.500 l-3.500-2z" fill="#f0a030"/></svg>
<div class="t" style="left:567.500px;top:195.500px;font-size:11.400px;color:#8b8b8b;transform-origin:0 50%;transform:scaleX(.96)">Export Scenario to Workspace</div>
<svg class="a" style="left:896px;top:192px" width="100" height="18" viewBox="896 192 100 18"><path d="M898.500 201.500h10" stroke="#7a7a7a" stroke-width="1"/><rect x="940.500" y="196.500" width="9" height="9" rx="1" fill="none" stroke="#7a7a7a" stroke-width="1"/><path d="M983.500 196 l9.500 9.500 M993 196 l-9.500 9.500" stroke="#7a7a7a" stroke-width="1"/></svg>
<div class="a" style="left:550px;top:224.500px;width:450px;height:71px;border:1px solid #6e6e6e;background:#f4f4f4"></div>
<div class="a" style="left:550px;top:244px;width:450px;height:1px;background:#6e6e6e"></div>
<div class="t" style="left:554.500px;top:228.500px;font-size:11.300px;color:#222">Export Scenario</div>
<div class="t" style="left:561px;top:259.500px;font-size:11.300px;color:#222">Scenario Name</div>
<div class="a" style="left:650px;top:254px;width:114.500px;height:23px;background:#fff;border:1px solid #6b6b6b"></div>
<div class="t" style="left:654.500px;top:259.500px;font-size:11.300px;color:#222">Scenario</div>
<div class="a" style="left:803px;top:324px;width:94px;height:23px;background:#fbfbfb;border:1px solid #6e6e6e;border-radius:4px;font-size:11.300px;line-height:21px;text-align:center;color:#222">Export</div>
<div class="a" style="left:907px;top:324px;width:93px;height:23px;background:#fbfbfb;border:1px solid #6e6e6e;border-radius:4px;font-size:11.300px;line-height:21px;text-align:center;color:#222">Cancel</div>
<!--OVERLAY-->
<svg class="a" style="left:1000px;top:20px" width="200" height="180" viewBox="1000 20 200 180">
<defs><filter id="sh" x="-20%" y="-20%" width="140%" height="140%"><feDropShadow dx="1.500" dy="2" stdDeviation="1.700" flood-color="#000" flood-opacity="0.420"/></filter></defs>
<g filter="url(#sh)">
<rect x="1110.500" y="29.500" width="59.500" height="87" fill="none" stroke="#f14348" stroke-width="3"/>
<path d="M1109.600 114.600 L1112.400 118.400 L1022.600 180.600 L1026.300 184.800 L1011 187.500 L1016.500 172.800 L1020.300 177.700 Z" fill="#f14348"/>
</g>
</svg>
</body>
</html>
